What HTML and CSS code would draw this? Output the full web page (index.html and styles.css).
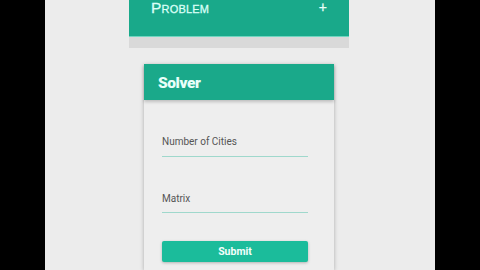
FILE: index.html
```html
<!DOCTYPE html>
<html>
<head>
<meta charset="utf-8">
<link rel="stylesheet" href="styles.css">
</head>
<body>
<div class="page">
  <div class="problem">
    <div class="problem-bar">
      <span class="problem-title">Problem</span>
      <span class="problem-plus">+</span>
    </div>
    <div class="problem-band"></div>
  </div>
  <div class="card">
    <div class="card-head">Solver</div>
    <div class="card-body">
      <div class="field">Number of Cities</div>
      <div class="field">Matrix</div>
      <div class="submit">Submit</div>
    </div>
  </div>
</div>
</body>
</html>
```
FILE: styles.css
```css
html, body {
  margin: 0;
  padding: 0;
  background: #000;
  height: 270px;
  overflow: hidden;
}
.page {
  width: 390px;
  height: 270px;
  margin-left: 45px;
  background: #ececec;
  display: flex;
  flex-direction: column;
}
.problem {
  margin-left: 84px;
  width: 220px;
}
.problem-bar {
  height: 37px;
  background: #19a98a;
  display: flex;
  justify-content: space-between;
  align-items: flex-start;
  padding: 0 22px 0 22px;
  box-sizing: border-box;
  border-bottom: 1px solid #6fd6c0;
}
.problem-title {
  font-family: "Liberation Sans", Arial, sans-serif;
  font-variant: small-caps;
  font-size: 15.5px;
  line-height: 16px;
  color: #d9fff6;
  letter-spacing: 0.2px;
  -webkit-text-stroke: 0.3px #d9fff6;
}
.problem-plus {
  font-family: "Liberation Sans", Arial, sans-serif;
  font-size: 14px;
  line-height: 14px;
  color: #e6fff8;
  -webkit-text-stroke: 0.3px #e6fff8;
}
.problem-band {
  height: 11px;
  background: #d9d9d9;
}
.card {
  margin-left: 99px;
  margin-top: 16px;
  width: 190px;
  flex: 1;
  display: flex;
  flex-direction: column;
  box-shadow: 0 1px 4px rgba(0,0,0,0.28);
}
.card-head {
  height: 36px;
  box-sizing: border-box;
  padding-top: 3px;
  background: #1aa98a;
  color: #e8fff9;
  font-family: Roboto, "Liberation Sans", sans-serif;
  font-weight: 900;
  font-size: 15.5px;
  line-height: 33px;
  padding-left: 14px;
  box-shadow: 0 2px 3px rgba(0,0,0,0.2);
  position: relative;
  z-index: 1;
  letter-spacing: -0.4px;
}
.card-body {
  flex: 1;
  background: #eeeeee;
  padding: 35px 26px 0 18px;
  display: flex;
  flex-direction: column;
}
.field {
  font-family: Roboto, "Liberation Sans", sans-serif;
  font-size: 10px;
  color: #555;
  line-height: 14px;
  padding-bottom: 7px;
  border-bottom: 1px solid #9fd8cc;
  margin-bottom: 35px;
}
.field + .field {
  padding-bottom: 6px;
  margin-bottom: 28px;
}
.submit {
  height: 21px;
  background: #1bbc9b;
  border-radius: 2px;
  color: #f2fffb;
  font-family: Roboto, "Liberation Sans", sans-serif;
  font-weight: 700;
  font-size: 10.5px;
  line-height: 21px;
  text-align: center;
  box-shadow: 0 1px 3px rgba(0,0,0,0.25);
}
```
